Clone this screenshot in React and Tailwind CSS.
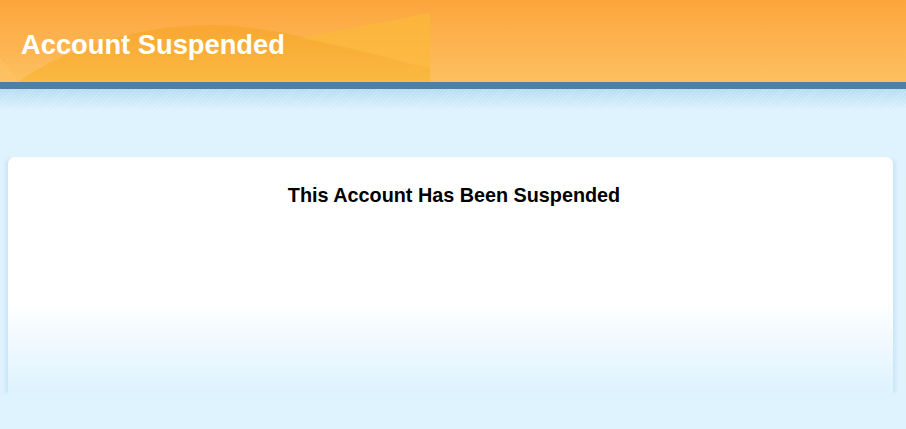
export default function App() {
    return (
        <div className="min-h-[429px] bg-[#dff3fe] font-['Liberation_Sans',Arial,sans-serif]">
            <header className="relative h-[82px] overflow-hidden bg-gradient-to-b from-[#fca53b] to-[#fdc060]">
                <svg className="absolute left-0 top-0" width="430" height="82" viewBox="0 0 430 82">
                    <defs>
                        <linearGradient id="wave" x1="0" y1="0" x2="0" y2="1">
                            <stop offset="0" stopColor="#f7a52c" />
                            <stop offset="1" stopColor="#f9b83a" />
                        </linearGradient>
                    </defs>
                    <path d="M18 82 C 70 44, 150 24, 215 25 C 285 27, 360 52, 430 68 L 430 82 Z" fill="url(#wave)" opacity="0.8" />
                    <path d="M300 38 L 430 13 L 430 68 C 390 58, 340 46, 300 38 Z" fill="#fbb93a" opacity="0.7" />
                    <path d="M0 58 C 8 66, 14 74, 18 82 L 0 82 Z" fill="#fdc468" opacity="0.5" />
                </svg>
                <h1 className="relative pl-[21px] pt-[31px] text-[27.3px] font-bold leading-[27px] text-white">Account Suspended</h1>
            </header>
            <div className="h-[7px] bg-[#4f7fa9]" />
            <div className="h-[22px] bg-[image:repeating-linear-gradient(135deg,rgba(255,255,255,0.18)_0_1px,transparent_1px_3px),linear-gradient(to_bottom,#b6dcf1,#dff3fe)]" />
            <main className="pl-[8px] pr-[13px] pt-[46px]">
                <section className="h-[238px] rounded-t-[7px] bg-gradient-to-b from-white from-[60%] to-[#dff3fe] to-[98%] shadow-[-5px_0_3px_-2px_rgba(170,210,235,0.35),5px_0_3px_-2px_rgba(170,210,235,0.35)]">
                    <h2 className="pl-[7px] pt-[28px] text-center text-[19.8px] font-bold leading-[20px] text-black">This Account Has Been Suspended</h2>
                </section>
            </main>
        </div>
    );
}
